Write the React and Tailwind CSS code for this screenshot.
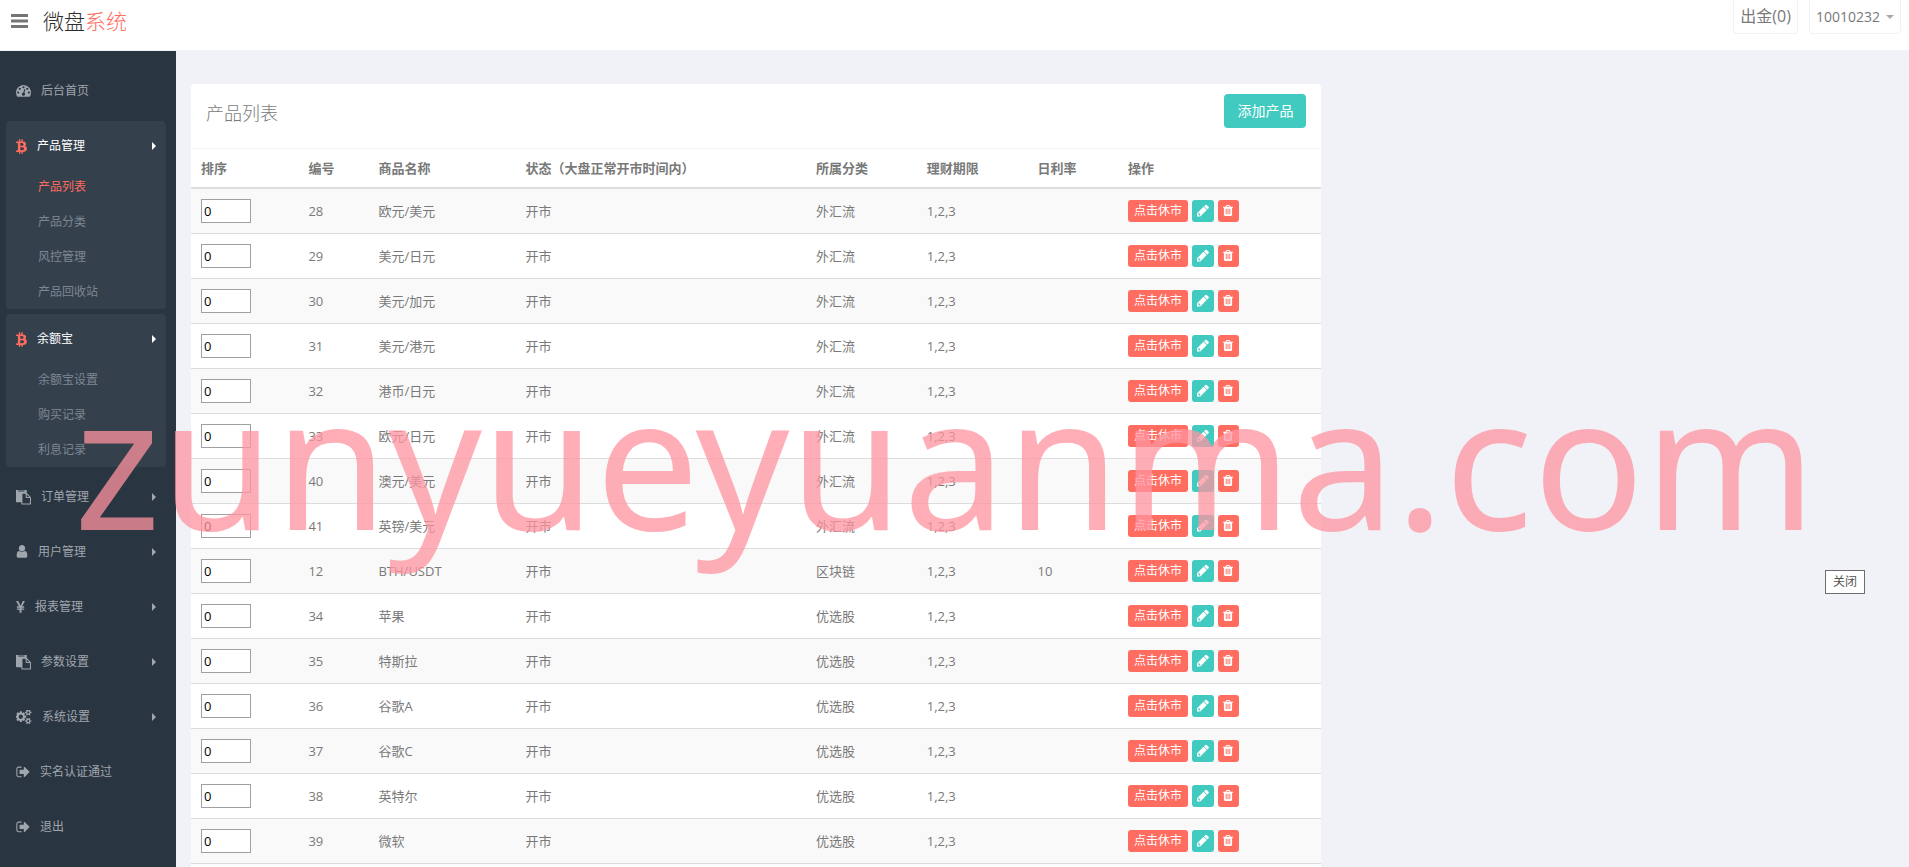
import React from "react";
import { FaBtc } from "react-icons/fa";

const menu = [
  { title: "后台首页", icon: "dashboard" },
  {
    title: "产品管理",
    icon: "btc",
    open: true,
    children: ["产品列表", "产品分类", "风控管理", "产品回收站"],
  },
  {
    title: "余额宝",
    icon: "btc",
    open: true,
    children: ["余额宝设置", "购买记录", "利息记录"],
  },
  { title: "订单管理", icon: "paste", arrow: true },
  { title: "用户管理", icon: "user", arrow: true },
  { title: "报表管理", icon: "yen", arrow: true },
  { title: "参数设置", icon: "paste", arrow: true },
  { title: "系统设置", icon: "cogs", arrow: true },
  { title: "实名认证通过", icon: "signout" },
  { title: "退出", icon: "signout" },
];

const products = [
  { id: 28, name: "欧元/美元", type: "外汇流" },
  { id: 29, name: "美元/日元", type: "外汇流" },
  { id: 30, name: "美元/加元", type: "外汇流" },
  { id: 31, name: "美元/港元", type: "外汇流" },
  { id: 32, name: "港币/日元", type: "外汇流" },
  { id: 33, name: "欧元/日元", type: "外汇流" },
  { id: 40, name: "澳元/美元", type: "外汇流" },
  { id: 41, name: "英镑/美元", type: "外汇流" },
  { id: 12, name: "BTH/USDT", type: "区块链", rate: "10" },
  { id: 34, name: "苹果", type: "优选股" },
  { id: 35, name: "特斯拉", type: "优选股" },
  { id: 36, name: "谷歌A", type: "优选股" },
  { id: 37, name: "谷歌C", type: "优选股" },
  { id: 38, name: "英特尔", type: "优选股" },
  { id: 39, name: "微软", type: "优选股" },
];

// column title + width share of the table
const columns = [
  { title: "排序", width: "w-[9.5%]" },
  { title: "编号", width: "w-[6.2%]" },
  { title: "商品名称", width: "w-[13%]" },
  { title: "状态（大盘正常开市时间内）", width: "w-[25.7%]" },
  { title: "所属分类", width: "w-[9.8%]" },
  { title: "理财期限", width: "w-[9.8%]" },
  { title: "日利率", width: "w-[8%]" },
  { title: "操作", width: "w-[18%]" },
];

const paths = {
  dashboard:
    "M384 1152q0-53-37.5-90.5t-90.5-37.5-90.5 37.5-37.5 90.5 37.5 90.5 90.5 37.5 90.5-37.5 37.5-90.5zm192-448q0-53-37.5-90.5t-90.5-37.5-90.5 37.5-37.5 90.5 37.5 90.5 90.5 37.5 90.5-37.5 37.5-90.5zm428 481l101-382q6-26-7.5-48.5t-38.5-29.5-48 6.5-30 39.5l-101 382q-60 5-107 43.5t-63 98.5q-20 77 20 146t117 89 146-20 89-117q16-60-6-117t-72-91zm660-33q0-53-37.5-90.5t-90.5-37.5-90.5 37.5-37.5 90.5 37.5 90.5 90.5 37.5 90.5-37.5 37.5-90.5zm-640-640q0-53-37.5-90.5t-90.5-37.5-90.5 37.5-37.5 90.5 37.5 90.5 90.5 37.5 90.5-37.5 37.5-90.5zm448 192q0-53-37.5-90.5t-90.5-37.5-90.5 37.5-37.5 90.5 37.5 90.5 90.5 37.5 90.5-37.5 37.5-90.5zm320 448q0 261-141 483-19 29-54 29h-1402q-35 0-54-29-141-221-141-483 0-182 71-348t191-286 286-191 348-71 348 71 286 191 191 286 71 348z",
  paste:
    "M768 1664h896v-640h-416q-40 0-68-28t-28-68v-416h-384v1152zm256-1440v-64q0-13-9.5-22.5t-22.5-9.5h-704q-13 0-22.5 9.5t-9.5 22.5v64q0 13 9.5 22.5t22.5 9.5h704q13 0 22.5-9.5t9.5-22.5zm256 672h299l-299-299v299zm512 128v672q0 40-28 68t-68 28h-960q-40 0-68-28t-28-68v-160h-544q-40 0-68-28t-28-68v-1344q0-40 28-68t68-28h1088q40 0 68 28t28 68v328q21 13 36 28l408 408q28 28 48 76t20 88z",
  user: "M1536 1399q0 109-62.5 187t-150.5 78h-854q-88 0-150.5-78t-62.5-187q0-85 8.5-160.5t31.5-152 58.5-131 94-89 134.5-34.5q131 128 313 128t313-128q76 0 134.5 34.5t94 89 58.5 131 31.5 152 8.5 160.5zm-256-887q0 159-112.5 271.5t-271.5 112.5-271.5-112.5-112.5-271.5 112.5-271.5 271.5-112.5 271.5 112.5 112.5 271.5z",
  yen: "M985.5 1536h-172q-13 0-22.5-9t-9.5-23v-330h-288q-13 0-22.5-9t-9.5-23v-103q0-13 9.5-22.5t22.5-9.5h288v-85h-288q-13 0-22.5-9t-9.5-23v-104q0-13 9.5-22.5t22.5-9.5h214l-321-578q-8-16 0-32 10-16 28-16h194q19 0 29 18l215 425q19 38 56 125 10-24 30.5-68t27.5-61l191-420q8-19 29-19h191q17 0 27 16 9 14 1 31l-313 579h215q13 0 22.5 9.5t9.5 22.5v104q0 14-9.5 23t-22.5 9h-290v85h290q13 0 22.5 9.5t9.5 22.5v103q0 14-9.5 23t-22.5 9h-290v330q0 13-9.5 22.5t-22.5 9.5z",
  cogs: "M832 896q0-106-75-181t-181-75-181 75-75 181 75 181 181 75 181-75 75-181zm768 512q0-52-38-90t-90-38-90 38-38 90q0 53 37.5 90.5t90.5 37.5 90.5-37.5 37.5-90.5zm0-1024q0-52-38-90t-90-38-90 38-38 90q0 53 37.5 90.5t90.5 37.5 90.5-37.5 37.5-90.5zm-384 421v185q0 10-7 19.5t-16 10.5l-155 24q-11 35-32 76 34 48 90 115 7 11 7 20 0 12-7 19-23 30-82.5 89.5t-78.5 59.5q-11 0-21-7l-115-90q-37 19-77 31-11 108-23 155-7 24-30 24h-186q-11 0-20-7.5t-10-17.5l-23-153q-34-10-75-31l-118 89q-7 7-20 7-11 0-21-8-144-133-144-160 0-9 7-19 10-14 41-53t47-61q-23-44-35-82l-152-24q-10-1-17-9.5t-7-19.5v-185q0-10 7-19.5t16-10.5l155-24q11-35 32-76-34-48-90-115-7-11-7-20 0-12 7-20 22-30 82-89t79-59q11 0 21 7l115 90q34-18 77-32 11-108 23-154 7-24 30-24h186q11 0 20 7.5t10 17.5l23 153q34 10 75 31l118-89q8-7 20-7 11 0 21 8 144 133 144 160 0 8-7 19-12 16-42 54t-45 60q23 48 34 82l152 23q10 2 17 10.5t7 19.5zm640 533v140q0 16-149 31-12 27-30 52 51 113 51 138 0 4-4 7-122 71-124 71-8 0-46-47t-52-68q-20 2-30 2t-30-2q-14 21-52 68t-46 47q-2 0-124-71-4-3-4-7 0-25 51-138-18-25-30-52-149-15-149-31v-140q0-16 149-31 13-29 30-52-51-113-51-138 0-4 4-7 4-2 35-20t59-34 30-16q8 0 46 46.5t52 67.5q20-2 30-2t30 2q51-71 92-112l6-2q4 0 124 70 4 3 4 7 0 25-51 138 17 23 30 52 149 15 149 31zm0-1024v140q0 16-149 31-12 27-30 52 51 113 51 138 0 4-4 7-122 71-124 71-8 0-46-47t-52-68q-20 2-30 2t-30-2q-14 21-52 68t-46 47q-2 0-124-71-4-3-4-7 0-25 51-138-18-25-30-52-149-15-149-31v-140q0-16 149-31 13-29 30-52-51-113-51-138 0-4 4-7 4-2 35-20t59-34 30-16q8 0 46 46.5t52 67.5q20-2 30-2t30 2q51-71 92-112l6-2q4 0 124 70 4 3 4 7 0 25-51 138 17 23 30 52 149 15 149 31z",
  signout:
    "M704 1440q0 4 1 20t.5 26.5-3 23.5-10 19.5-20.5 6.5h-320q-119 0-203.5-84.5t-84.5-203.5v-704q0-119 84.5-203.5t203.5-84.5h320q13 0 22.5 9.5t9.5 22.5q0 4 1 20t.5 26.5-3 23.5-10 19.5-20.5 6.5h-320q-66 0-113 47t-47 113v704q0 66 47 113t113 47h312l11.5 1 11.5 3 8 5.5 7 9 2 13.5zm928-544q0 26-19 45l-544 544q-19 19-45 19t-45-19-19-45v-288h-448q-26 0-45-19t-19-45v-384q0-26 19-45t45-19h448v-288q0-26 19-45t45-19 45 19l544 544q19 19 19 45z",
  pencil:
    "M491 1536l91-91-235-235-91 91v107h128v128h107zM960 416l416 416-832 832h-416v-416zm683 96q0 53-37 90l-166 166-416-416 166-165q36-38 90-38 53 0 91 38l235 234q37 39 37 91z",
  trash:
    "M704 1376v-704q0-14-9-23t-23-9h-64q-14 0-23 9t-9 23v704q0 14 9 23t23 9h64q14 0 23-9t9-23zm256 0v-704q0-14-9-23t-23-9h-64q-14 0-23 9t-9 23v704q0 14 9 23t23 9h64q14 0 23-9t9-23zm256 0v-704q0-14-9-23t-23-9h-64q-14 0-23 9t-9 23v704q0 14 9 23t23 9h64q14 0 23-9t9-23zm-544-992h448l-48-117q-7-9-17-11h-317q-10 2-17 11zm928 32v64q0 14-9 23t-23 9h-96v948q0 83-47 143.5t-113 60.5h-832q-66 0-113-58.5t-47-141.5v-952h-96q-14 0-23-9t-9-23v-64q0-14 9-23t23-9h309l70-167q15-37 54-63t79-26h320q40 0 79 26t54 63l70 167h309q14 0 23 9t9 23z",
};

const icons = {
  dashboard: { box: "0 128 1792 1792", size: "w-[15px]" },
  paste: { box: "0 64 1792 1792", size: "w-[15px]" },
  user: { box: "256 128 1280 1792", size: "w-3" },
  yen: { box: "384 0 1024 1792", size: "w-[9px]" },
  cogs: { box: "0 96 1920 1792", size: "w-4" },
  signout: { box: "64 64 1600 1792", size: "w-3.5" },
  pencil: { box: "128 0 1536 1792", size: "w-3" },
  trash: { box: "192 0 1408 1792", size: "w-2.5" },
};

function Icon({ name }) {
  if (name === "btc") return <FaBtc className="w-[11px] h-[15px] shrink-0 text-[#ff6c60]" />;
  return (
    <svg
      viewBox={icons[name].box}
      className={`${icons[name].size} h-[15px] shrink-0`}
      fill="currentColor"
      aria-hidden="true"
    >
      <path d={paths[name]} />
    </svg>
  );
}

function Caret() {
  return (
    <svg viewBox="0 0 4 8" className="w-1 h-2 ml-auto" fill="currentColor" aria-hidden="true">
      <path d="M0 0l4 4-4 4z" />
    </svg>
  );
}

function Sidebar() {
  return (
    <aside className="w-44 shrink-0 bg-[#2a3542] pt-[15px] pl-1.5 pr-2.5">
      <ul className="flex flex-col gap-[5px] text-xs">
        {menu.map((item, i) => (
          <li key={i} className={item.open ? "bg-[#35404d] rounded" : ""}>
            <a
              href="#"
              className={`flex items-center gap-2.5 h-[50px] pl-2.5 pr-2.5 ${
                item.open ? "text-white" : "text-[#a0a6ad]"
              }`}
            >
              <Icon name={item.icon} />
              {item.title}
              {(item.open || item.arrow) && <Caret />}
            </a>
            {item.children && (
              <ul className="-mt-0.5">
                {item.children.map((child) => (
                  <li key={child}>
                    <a
                      href="#"
                      className={`flex items-center h-[35px] pl-8 ${
                        child === "产品列表" ? "text-[#ff6c60]" : "text-[#7d8791]"
                      }`}
                    >
                      {child}
                    </a>
                  </li>
                ))}
              </ul>
            )}
          </li>
        ))}
      </ul>
    </aside>
  );
}

function ProductTable() {
  return (
    <table className="w-full table-fixed text-left text-[13px] leading-5">
      <thead>
        <tr className="h-[39px] border-b-2 border-[#ddd]">
          {columns.map((col) => (
            <th key={col.title} className={`${col.width} px-2.5 font-bold whitespace-nowrap`}>
              {col.title}
            </th>
          ))}
        </tr>
      </thead>
      <tbody>
        {products.map((p) => (
          <tr key={p.id} className="h-[45px] border-b border-[#ddd] odd:bg-[#f9f9f9]">
            <td className="px-2.5">
              <input
                type="text"
                defaultValue="0"
                aria-label={`排序 ${p.id}`}
                className="block w-[50px] h-6 px-0.5 border border-[#a0a0a0] bg-white text-black"
              />
            </td>
            <td className="px-2.5">{p.id}</td>
            <td className="px-2.5">{p.name}</td>
            <td className="px-2.5">开市</td>
            <td className="px-2.5">{p.type}</td>
            <td className="px-2.5">1,2,3</td>
            <td className="px-2.5">{p.rate}</td>
            <td className="px-2.5">
              <div className="flex items-center gap-1 text-xs text-white">
                <button className="h-[22px] px-1.5 rounded-[3px] bg-[#ff6c60]">点击休市</button>
                <button
                  aria-label="编辑"
                  className="h-[22px] w-[22px] flex items-center justify-center rounded-[3px] bg-[#41cac0]"
                >
                  <Icon name="pencil" />
                </button>
                <button
                  aria-label="删除"
                  className="h-[22px] w-[21px] flex items-center justify-center rounded-[3px] bg-[#ff6c60]"
                >
                  <Icon name="trash" />
                </button>
              </div>
            </td>
          </tr>
        ))}
      </tbody>
    </table>
  );
}

function App() {
  return (
    <div className="relative flex flex-col h-screen overflow-hidden bg-[#f1f2f7] text-[#797979] font-['Open_Sans','Noto_Sans_CJK_SC',sans-serif]">
      {/* Header */}
      <header className="flex items-start shrink-0 h-[51px] bg-white border-b border-[#f1f2f7]">
        <button aria-label="菜单" className="mt-3.5 ml-[11px]">
          <svg viewBox="0 0 17 14" className="w-[17px] h-3.5" fill="#757575">
            <path d="M0 0h17v3H0zM0 5.5h17v3H0zM0 11h17v3H0z" />
          </svg>
        </button>
        <a href="#" className="ml-[15px] mt-1.5 text-[21px] leading-[30px] font-light text-[#2e2e2e]">
          微盘<span className="text-[#ff6c60]">系统</span>
        </a>
        <div className="flex gap-[11px] ml-auto pr-2">
          <a href="#" className="h-[34px] px-1.5 leading-8 border border-t-0 border-[#f1f2f7] rounded-b text-base">
            出金(0)
          </a>
          <button className="flex items-center h-[34px] px-1.5 gap-1.5 border border-t-0 border-[#f1f2f7] rounded-b text-sm">
            10010232
            <svg viewBox="0 0 8 4" className="w-2 h-1" fill="#a9a9b0">
              <path d="M0 0h8l-4 4z" />
            </svg>
          </button>
        </div>
      </header>

      <div className="flex flex-1 min-h-0">
        <Sidebar />
        <main className="flex flex-1 pl-[15px] pt-[33px]">
          <section className="w-[65.8%] bg-white rounded-t">
            <div className="flex items-start justify-between h-[65px] px-[15px] pt-2.5 border-b border-[#f5f5f7]">
              <h1 className="text-lg leading-[38px] font-light">产品列表</h1>
              <button className="h-[34px] px-[13px] rounded bg-[#41cac0] text-sm text-white">添加产品</button>
            </div>
            <ProductTable />
          </section>
        </main>
      </div>

      {/* Site watermark */}
      <div className="absolute left-[74px] top-[335px] text-[184px] leading-[248px] whitespace-nowrap text-[#ff94a0] opacity-75 pointer-events-none font-['Noto_Sans',sans-serif]">
        zunyueyuanma.com
      </div>

      <button className="absolute right-11 top-[570px] h-6 w-10 border border-[#6e6e6e] bg-white text-xs text-[#555]">
        关闭
      </button>
    </div>
  );
}

export default App;
